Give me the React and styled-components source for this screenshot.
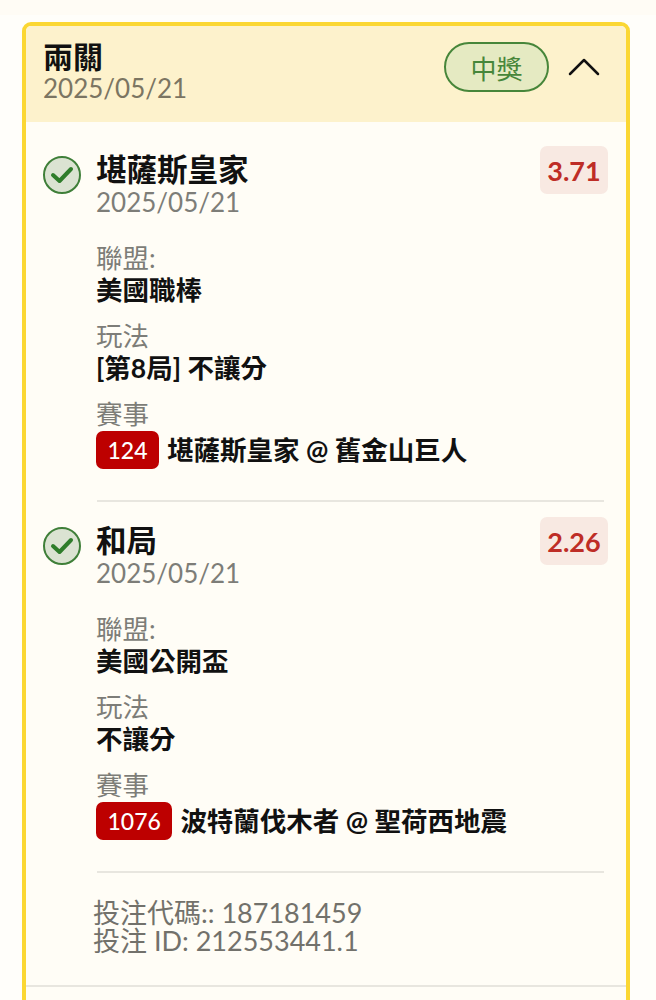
import React from 'react';
import styled, { createGlobalStyle } from 'styled-components';

const GlobalStyle = createGlobalStyle`
  html, body {
    margin: 0;
    height: 1000px;
    overflow: hidden;
    background: #fffefa;
    font-family: Lato, "Noto Sans CJK TC", sans-serif;
  }
`;

const TopStrip = styled.div`
  height: 15px;
  background: #fffcf5;
`;

const Page = styled.div`
  padding: 7px 26px 0 22px;
`;

const Card = styled.div`
  border: 4px solid #fbd733;
  border-radius: 9px;
  background: #fffdf6;
  overflow: hidden;
`;

const Header = styled.div`
  height: 96px;
  box-sizing: border-box;
  padding: 14px 26px 0 17px;
  background: #fdf2cc;
  display: flex;
  justify-content: space-between;
  align-items: flex-start;
`;

const Title = styled.div`
  font-size: 30px;
  line-height: 33px;
  font-weight: 700;
  color: #111;
`;

const DateText = styled.div`
  font-size: 26px;
  line-height: 29px;
  padding-top: 1px;
  color: ${(props) => props.$color || '#7d7d78'};
`;

const HeaderRight = styled.div`
  display: flex;
  align-items: center;
  gap: 19px;
  padding-top: 2px;
`;

const Status = styled.div`
  width: 105px;
  height: 50px;
  box-sizing: border-box;
  border: 2px solid #47863a;
  border-radius: 25px;
  background: #e5eac2;
  color: #47863a;
  font-size: 26px;
  display: flex;
  align-items: center;
  justify-content: center;
`;

const Body = styled.div`
  padding: 24px 18px 0 16px;
`;

const Leg = styled.div`
  display: grid;
  grid-template-columns: 38px 1fr auto;
  column-gap: 16px;
  align-items: start;
`;

const CheckWrap = styled.div`
  padding-top: 9px;
  line-height: 0;
`;

const LegMain = styled.div`
  min-width: 0;
`;

const LegTitle = styled.div`
  font-size: 30.5px;
  line-height: 35px;
  padding-top: 6px;
  font-weight: 700;
  color: #111;
`;

const Odds = styled.div`
  width: 68px;
  height: 48px;
  border-radius: 7px;
  background: #f8e9e2;
  color: #be2d26;
  font-size: 27px;
  font-weight: 700;
  display: flex;
  align-items: center;
  justify-content: center;
`;

const Field = styled.div`
  margin-top: ${(props) => props.$first ? '25px' : '14px'};
`;

const Label = styled.div`
  font-size: 26.5px;
  line-height: 32px;
  color: #7d7d78;
`;

const Value = styled.div`
  display: flex;
  align-items: center;
  gap: 8px;
  font-size: 26.5px;
  line-height: 32px;
  font-weight: 700;
  color: #111;
`;

const Code = styled.span`
  height: 38px;
  margin-top: 1px;
  padding: 0 11.5px;
  border-radius: 7px;
  background: #bd0000;
  color: #fff;
  font-size: 23px;
  font-weight: 500;
  display: flex;
  align-items: center;
`;

const Divider = styled.hr`
  border: 0;
  height: 2px;
  background: #e8e6df;
  margin: ${(props) => props.$margin};
`;

const Meta = styled.div`
  padding: 0 0 30px 51px;
  font-size: 27px;
  line-height: 28px;
  color: #72716b;
`;

const CardFooter = styled.div`
  height: 40px;
  border-top: 2px solid #e8e6df;
`;

const Check = () => (
  <svg width="40" height="40" viewBox="0 0 40 40" fill="none">
    <circle cx="20" cy="20" r="18" fill="#dbe3d2" stroke="#3f7f39" strokeWidth="2" />
    <path d="M11 20 L17.5 26 L29 14" stroke="#2f7d2b" strokeWidth="4" strokeLinecap="round" strokeLinejoin="round" />
  </svg>
);

const Chevron = () => (
  <svg width="32" height="20" viewBox="0 0 32 20" fill="none">
    <path d="M2 17 L16 3 L30 17" stroke="#111" strokeWidth="2.5" strokeLinecap="round" strokeLinejoin="round" />
  </svg>
);

const legs = [
  { name: '堪薩斯皇家', odds: '3.71', league: '美國職棒', play: '[第8局] 不讓分', code: '124', match: '堪薩斯皇家 @ 舊金山巨人' },
  { name: '和局', odds: '2.26', league: '美國公開盃', play: '不讓分', code: '1076', match: '波特蘭伐木者 @ 聖荷西地震' },
];

const App = () => (
  <>
    <GlobalStyle />
    <TopStrip />
    <Page>
      <Card>
        <Header>
          <div>
            <Title>兩關</Title>
            <DateText $color="#7b7562">2025/05/21</DateText>
          </div>
          <HeaderRight>
            <Status>中獎</Status>
            <Chevron />
          </HeaderRight>
        </Header>
        <Body>
          {legs.map((leg, i) => (
            <React.Fragment key={leg.code}>
              <Leg>
                <CheckWrap><Check /></CheckWrap>
                <LegMain>
                  <LegTitle>{leg.name}</LegTitle>
                  <DateText>2025/05/21</DateText>
                  <Field $first>
                    <Label>聯盟:</Label>
                    <Value>{leg.league}</Value>
                  </Field>
                  <Field>
                    <Label>玩法</Label>
                    <Value>{leg.play}</Value>
                  </Field>
                  <Field>
                    <Label>賽事</Label>
                    <Value><Code>{leg.code}</Code>{leg.match}</Value>
                  </Field>
                </LegMain>
                <Odds>{leg.odds}</Odds>
              </Leg>
              <Divider $margin={i === 0 ? '31px 4px 15px 55px' : '31px 4px 26px 55px'} />
            </React.Fragment>
          ))}
          <Meta>
            <div>投注代碼:: 187181459</div>
            <div>投注 ID: 212553441.1</div>
          </Meta>
        </Body>
        <CardFooter />
      </Card>
    </Page>
  </>
);

export default App;
